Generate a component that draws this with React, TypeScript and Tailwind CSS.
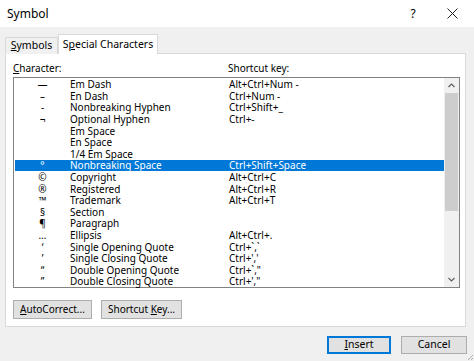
import React from "react";

const rows: [string, string, string][] = [
  ["—", "Em Dash", "Alt+Ctrl+Num -"],
  ["–", "En Dash", "Ctrl+Num -"],
  ["-", "Nonbreaking Hyphen", "Ctrl+Shift+_"],
  ["¬", "Optional Hyphen", "Ctrl+-"],
  ["", "Em Space", ""],
  ["", "En Space", ""],
  ["", "1/4 Em Space", ""],
  ["°", "Nonbreaking Space", "Ctrl+Shift+Space"],
  ["©", "Copyright", "Alt+Ctrl+C"],
  ["®", "Registered", "Alt+Ctrl+R"],
  ["™", "Trademark", "Alt+Ctrl+T"],
  ["§", "Section", ""],
  ["¶", "Paragraph", ""],
  ["…", "Ellipsis", "Alt+Ctrl+."],
  ["‘", "Single Opening Quote", "Ctrl+`,`"],
  ["’", "Single Closing Quote", "Ctrl+','"],
  ["“", "Double Opening Quote", "Ctrl+`,\""],
  ["”", "Double Closing Quote", "Ctrl+',\""],
];

const font = { fontFamily: '"Noto Sans", "Open Sans", sans-serif' };

export default function App() {
  return (
    <div
      className="w-[474px] h-[361px] bg-[#f0f0f0] flex flex-col text-black overflow-hidden relative"
      style={font}
    >
      {/* Title bar */}
      <div className="h-[27px] bg-white flex items-center shrink-0">
        <span className="pl-[7px] text-[12px]">Symbol</span>
        <div className="ml-auto flex items-center">
          <span className="text-[12px] w-[14px] text-center mr-[27px]">?</span>
          <svg width="11" height="11" viewBox="0 0 11 11" className="mr-[16px]">
            <path d="M0.5 0.5 L10.5 10.5 M10.5 0.5 L0.5 10.5" stroke="#222" strokeWidth="1" />
          </svg>
        </div>
      </div>

      {/* Tabs */}
      <div className="flex items-end pl-[5px] pt-[6px] h-[26px] shrink-0">
        <div className="h-[17px] w-[53px] border border-b-0 border-[#d9d9d9] bg-[#f0f0f0] flex items-center justify-center text-[10.5px] relative top-[1px]">
          <span><span className="underline">S</span>ymbols</span>
        </div>
        <div className="h-[20px] w-[100px] border border-b-0 border-[#d9d9d9] bg-white flex items-center justify-center text-[10.5px] relative top-[1px] z-10">
          <span>S<span className="underline">p</span>ecial Characters</span>
        </div>
      </div>

      {/* Panel */}
      <div className="ml-[5px] w-[461px] h-[274px] bg-white border border-[#d9d9d9] shrink-0 flex flex-col px-[7px]">
        <div className="flex text-[10px] h-[23px] items-end pb-[1px] shrink-0">
          <span className="w-[215px]"><span className="underline">C</span>haracter:</span>
          <span>Shortcut key:</span>
        </div>
        <div className="w-[447px] h-[211px] border border-[#828282] flex shrink-0">
          <div className="flex-1 pt-[0.5px] pl-[1px]">
            {rows.map(([g, n, k], i) => {
              const sel = i === 7;
              return (
                <div
                  key={i}
                  className={`h-[11.6px] flex items-center text-[10px] leading-none ${
                    sel ? "bg-[#0078d7] text-white" : ""
                  }`}
                >
                  <span className="w-[55px] text-center">{g}</span>
                  <span className="w-[159px] whitespace-nowrap">{n}</span>
                  <span className="whitespace-nowrap">{k}</span>
                </div>
              );
            })}
          </div>
          <div className="w-[15px] bg-[#f0f0f0] flex flex-col">
            <div className="h-[15px] flex items-center justify-center">
              <svg width="7" height="5" viewBox="0 0 7 5">
                <path d="M0.5 4 L3.5 1 L6.5 4" stroke="#606060" strokeWidth="1.2" fill="none" />
              </svg>
            </div>
            <div className="h-[118px] mx-[1px] bg-[#cdcdcd]" />
            <div className="flex-1" />
            <div className="h-[15px] flex items-center justify-center">
              <svg width="7" height="5" viewBox="0 0 7 5">
                <path d="M0.5 1 L3.5 4 L6.5 1" stroke="#606060" strokeWidth="1.2" fill="none" />
              </svg>
            </div>
          </div>
        </div>
        <div className="flex gap-[9px] mt-[12px] shrink-0">
          <button className="w-[79px] h-[19px] bg-[#e1e1e1] border border-[#adadad] text-[10px] flex items-center justify-center">
            <span><span className="underline">A</span>utoCorrect...</span>
          </button>
          <button className="w-[81px] h-[19px] bg-[#e1e1e1] border border-[#adadad] text-[10px] flex items-center justify-center">
            <span>Shortcut <span className="underline">K</span>ey...</span>
          </button>
        </div>
      </div>

      {/* Bottom buttons */}
      <div className="flex justify-end gap-[10px] pr-[7px] mt-[9px]">
        <button className="w-[64px] h-[18px] bg-[#e1e1e1] border-2 border-[#0078d7] text-[10.5px] flex items-center justify-center">
          <span><span className="underline">I</span>nsert</span>
        </button>
        <button className="w-[66px] h-[18px] bg-[#e1e1e1] border border-[#adadad] text-[10.5px] flex items-center justify-center">
          Cancel
        </button>
      </div>

      {/* Resize grip */}
      <svg width="8" height="8" viewBox="0 0 8 8" className="absolute right-0 bottom-0">
        <path d="M7 2 L2 7 M7 5 L5 7" stroke="#b0b0b0" strokeWidth="1" />
      </svg>
    </div>
  );
}
